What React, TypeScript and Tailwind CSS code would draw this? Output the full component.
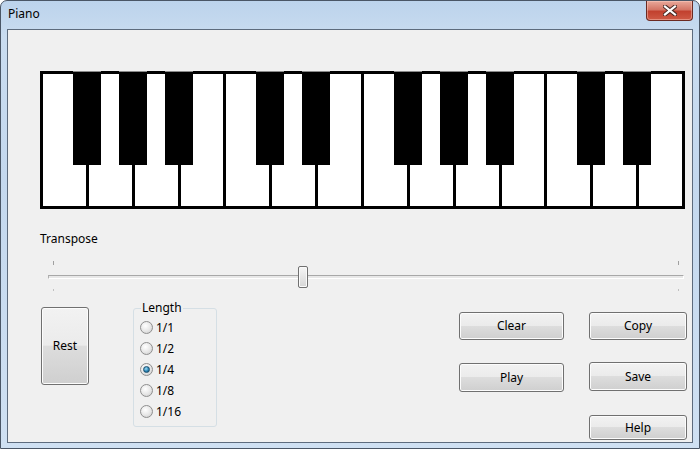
import React from "react";

const FONT = { fontFamily: '"Noto Sans", "Open Sans", Arial, sans-serif' };

function WinButton({ label, className }: { label: string; className: string }) {
  return (
    <div
      className={`flex items-center justify-center rounded-[3px] border border-[#707070] text-[12px] text-black shadow-[inset_0_0_0_1px_#fcfcfc] bg-[linear-gradient(to_bottom,#f2f2f2_0%,#ebebeb_49%,#dddddd_50%,#cfcfcf_100%)] ${className}`}
    >
      {label}
    </div>
  );
}

function Radio({ label, checked }: { label: string; checked?: boolean }) {
  return (
    <div className="flex h-[21px] items-center">
      <span className="flex h-[13px] w-[13px] items-center justify-center rounded-full border border-[#8f8f8f] bg-[radial-gradient(circle_at_40%_35%,#ffffff_0%,#e6e6e6_55%,#c8c8c8_100%)]">
        {checked ? (
          <span className="h-[7px] w-[7px] rounded-full border border-[#1c4f6e] bg-[radial-gradient(circle_at_40%_35%,#9fdcf6_0%,#2a85b5_55%,#0e4a6e_100%)]" />
        ) : null}
      </span>
      <span className="ml-[3px] text-[12px] leading-none text-black">{label}</span>
    </div>
  );
}

export default function App() {
  const whites = Array.from({ length: 14 });
  const blackDividers = [1, 2, 3, 5, 6, 8, 9, 10, 12, 13];
  const pitch = 600 / 14 + 3;

  return (
    <div
      style={FONT}
      className="flex h-[449px] w-[700px] flex-col overflow-hidden rounded-t-[7px] border border-[#4a5666] bg-[linear-gradient(to_bottom,#bcd3ec_0%,#c9dcf0_8%,#c4d8ee_40%,#cfe0f2_100%)]"
    >
      {/* Title bar */}
      <div className="flex h-[28px] shrink-0 items-start justify-between">
        <div className="pl-[7px] pt-[5px] text-[12px] leading-[16px] text-black">Piano</div>
        <div className="mr-[6px] flex h-[20px] w-[47px] items-center justify-center rounded-b-[4px] border border-t-0 border-[#6b2a22] bg-[linear-gradient(to_bottom,#e9a99b_0%,#d47666_45%,#c2412f_55%,#cf5a45_100%)] shadow-[inset_0_0_0_1px_rgba(255,210,200,0.45)]">
          <svg width="14" height="11" viewBox="0 0 14 11">
            <path d="M2 1.5 L12 9.5 M12 1.5 L2 9.5" stroke="#4a2a25" strokeWidth="4.2" strokeLinecap="square" />
            <path d="M2 1.5 L12 9.5 M12 1.5 L2 9.5" stroke="#ffffff" strokeWidth="2.2" strokeLinecap="square" />
          </svg>
        </div>
      </div>

      {/* Client area */}
      <div className="ml-[6px] mr-[6px] h-[414px] shrink-0 border border-[#5d6b7d] bg-[#f0f0f0]">
        {/* Keyboard */}
        <div className="relative ml-[32px] mt-[41px] flex h-[138px] w-[645px] gap-[3px] bg-black p-[3px]">
          {whites.map((_, i) => (
            <div key={i} className="h-full flex-1 bg-white" />
          ))}
          {blackDividers.map((d) => (
            <div
              key={d}
              style={{ left: `${pitch * d - 13}px` }}
              className="absolute top-0 h-[94px] w-[28px] border-t border-[#8a8a8a] bg-black"
            />
          ))}
        </div>

        {/* Transpose label */}
        <div className="ml-[32px] mt-[22px] text-[12px] leading-[16px] text-black">Transpose</div>

        {/* Slider */}
        <div className="relative ml-[40px] mt-[14px] h-[32px] w-[636px]">
          <div className="absolute left-[5px] top-0 h-[4px] w-px bg-[#a0a0a0]" />
          <div className="absolute right-[5px] top-0 h-[4px] w-px bg-[#a0a0a0]" />
          <div className="absolute left-[5px] top-[28px] h-[2px] w-px bg-[#c0c0c0]" />
          <div className="absolute right-[5px] top-[28px] h-[2px] w-px bg-[#c0c0c0]" />
          <div className="absolute left-0 right-0 top-[14px] h-[4px] border-l border-t border-b border-r border-l-[#b0b0b0] border-t-[#a8a8a8] border-b-white border-r-white bg-[#e8e8e8]" />
          <div className="absolute left-[250px] top-[5px] h-[22px] w-[10px] rounded-[2px] border border-[#707070] bg-[linear-gradient(to_bottom,#f6f6f6_0%,#e6e6e6_50%,#d6d6d6_100%)] shadow-[inset_0_0_0_1px_#fafafa]" />
        </div>

        {/* Bottom controls */}
        <div className="mt-[5px] flex items-start">
          <WinButton label="Rest" className="ml-[33px] mt-[9px] h-[78px] w-[48px]" />

          <fieldset className="ml-[44px] mt-[2px] h-[127px] w-[84px] rounded-[3px] border border-[#d5dfe5] pl-[6px]">
            <legend className="ml-[1px] px-[1px] text-[12px] leading-[16px] text-black">Length</legend>
            <div className="mt-[1px] flex flex-col">
              <Radio label="1/1" />
              <Radio label="1/2" />
              <Radio label="1/4" checked />
              <Radio label="1/8" />
              <Radio label="1/16" />
            </div>
          </fieldset>

          <div className="ml-[242px] mt-[14px] flex flex-col gap-[23px]">
            <WinButton label="Clear" className="h-[28px] w-[105px]" />
            <WinButton label="Play" className="h-[29px] w-[105px]" />
          </div>

          <div className="ml-[25px] mt-[14px] flex flex-col">
            <WinButton label="Copy" className="h-[28px] w-[98px]" />
            <WinButton label="Save" className="mt-[22px] h-[29px] w-[98px]" />
            <WinButton label="Help" className="mt-[24px] h-[25px] w-[98px]" />
          </div>
        </div>
      </div>
    </div>
  );
}
